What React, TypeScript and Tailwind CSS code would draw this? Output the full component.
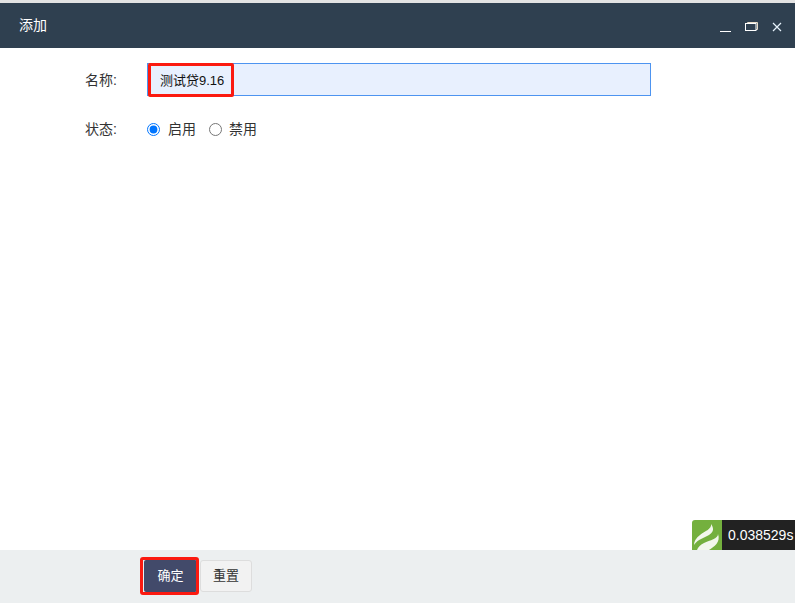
import React from "react";

const FONT = '"Liberation Sans", Arial, "Noto Sans CJK SC", sans-serif';

const App: React.FC = () => {
  return (
    <div
      className="flex h-[603px] w-[795px] flex-col overflow-hidden bg-[#e3e3e3] pt-[3px] text-[14px] text-[#333]"
      style={{ fontFamily: FONT }}
    >
      {/* Title bar */}
      <div className="flex h-[45px] shrink-0 items-center justify-between bg-[#2f4050] pl-[19px] pr-[13px] text-white">
        <span className="text-[14px]">添加</span>
        <div className="flex items-center gap-[14px]">
          <svg width="11" height="12" viewBox="0 0 11 12" className="mt-[2px]">
            <path d="M0 10.5H11" stroke="#fff" strokeWidth="1" />
          </svg>
          <svg width="13" height="12" viewBox="0 0 13 12" className="mt-[2px]">
            <path d="M2.5 2.5V1.5H12.5V8.5H11" fill="none" stroke="#e8dcc8" strokeWidth="1" />
            <rect x="0.5" y="2.5" width="10.5" height="7" fill="none" stroke="#fff" strokeWidth="1" />
          </svg>
          <svg width="10" height="10" viewBox="0 0 10 10" className="mt-[2px]">
            <path d="M1 1L9 9M9 1L1 9" stroke="#e6f2fb" strokeWidth="1.2" />
          </svg>
        </div>
      </div>

      {/* Form */}
      <div className="relative flex-1 bg-white">
        <div className="flex flex-col gap-[23px] pt-[15px]">
          <div className="flex items-center">
            <label className="w-[118px] pr-px pt-[2px] text-right">名称:</label>
            <div className="relative ml-[29px]">
              <input
                readOnly
                value="测试贷9.16"
                className="block h-[33px] w-[504px] border border-[#4d94f0] bg-[#e8f0fe] pl-[12px] text-[13px] text-[#111] outline-none"
              />
              {/* Annotation */}
              <div className="absolute left-[1px] top-0 h-[34px] w-[86px] rounded-[2px] border-[3px] border-[#fb1a10]" />
            </div>
          </div>
          <div className="flex items-center">
            <label className="w-[118px] pr-px text-right">状态:</label>
            <div className="ml-[29px] flex items-center">
              <input type="radio" name="status" defaultChecked className="m-0 h-[13px] w-[13px]" />
              <span className="ml-[8px]">启用</span>
              <input type="radio" name="status" className="m-0 ml-[13px] h-[13px] w-[13px]" />
              <span className="ml-[7px]">禁用</span>
            </div>
          </div>
        </div>

        {/* Debug timer */}
        <div className="absolute bottom-0 right-0 flex h-[30px] items-start">
          <div className="h-[30px] w-[30px] overflow-hidden rounded-tl-[3px] bg-[#74b03e]">
            <svg width="30" height="30" viewBox="0 0 30 30">
              <path d="M19 4C20 9 13 11 8 15C4 18 2 21 2 25C6 19 12 18 17 15C22 12 22 8 19 4Z" fill="#f2f7ec" />
              <path d="M26 14C26 19 18 20 12 23C8 25 6 27 5 30H17C22 27 29 22 26 14Z" fill="#f2f7ec" />
            </svg>
          </div>
          <div className="flex h-[30px] w-[73px] items-center bg-[#222] pl-[6px] text-[14px] text-white">0.038529s</div>
        </div>
      </div>

      {/* Footer */}
      <div className="flex h-[53px] shrink-0 items-center bg-[#eceff0] pl-[144px] pb-[1px]">
        <div className="relative flex">
          <button className="h-[32px] w-[53px] rounded-[2px] bg-[#424a6a] text-[13px] text-white">确定</button>
          {/* Annotation */}
          <div className="absolute -left-[4px] -top-[3px] h-[38px] w-[59px] rounded-[3px] border-[3px] border-[#fb1a10]" />
          <button className="ml-[3px] h-[32px] w-[52px] rounded-[3px] border border-[#dddddd] bg-[#f2f2f2] text-[13px] text-[#333]">重置</button>
        </div>
      </div>
    </div>
  );
};

export default App;
